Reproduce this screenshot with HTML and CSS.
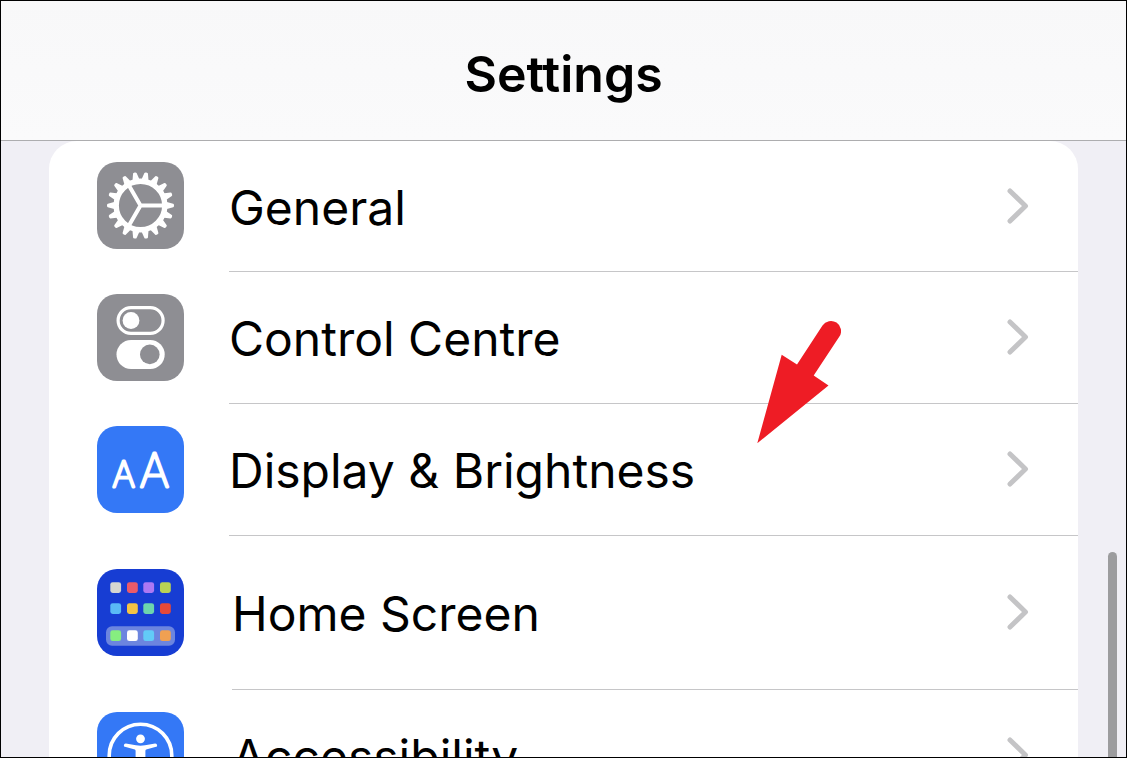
FILE: index.html
```
<!DOCTYPE html>
<html lang="en-GB">
<head>
<meta charset="utf-8">
<meta name="viewport" content="width=device-width, initial-scale=1">
<title>Settings</title>
<link rel="stylesheet" href="styles.css">
</head>
<body>
<div class="screen">
  <header class="navbar"><h1 class="title">Settings</h1></header>
  <main class="content">
    <nav class="card" aria-label="Settings">
      <a class="row row-first" href="#general">
        <svg class="icon icon-grey" viewBox="0 0 87 87" aria-hidden="true">
          <defs>
            <path id="tooth" d="M68 39.6 L76.2 41.7 Q77 42 77 43.5 T76.2 45.3 L68 47.4Z"/>
            <g id="teeth">
              <use href="#tooth"/>
              <use href="#tooth" transform="rotate(20 43.5 43.5)"/>
              <use href="#tooth" transform="rotate(40 43.5 43.5)"/>
              <use href="#tooth" transform="rotate(60 43.5 43.5)"/>
              <use href="#tooth" transform="rotate(80 43.5 43.5)"/>
              <use href="#tooth" transform="rotate(100 43.5 43.5)"/>
            </g>
          </defs>
          <g fill="#fff">
            <use href="#teeth"/>
            <use href="#teeth" transform="rotate(120 43.5 43.5)"/>
            <use href="#teeth" transform="rotate(240 43.5 43.5)"/>
          </g>
          <circle cx="43.5" cy="43.5" r="24.3" fill="none" stroke="#fff" stroke-width="5.4"/>
          <path d="M43.5 43.5H67M43.5 43.5L31.8 23.2M43.5 43.5L31.8 63.8" stroke="#fff" stroke-width="4"/>
        </svg>
        <span class="label">General</span>
        <svg class="chevron" viewBox="0 0 22 36" aria-hidden="true"><path d="M3 3L18.5 18L3 33"/></svg>
      </a>
      <a class="row" href="#control-centre">
        <svg class="icon icon-grey" viewBox="0 0 87 87" aria-hidden="true">
          <rect x="21.1" y="13.6" width="45" height="25.8" rx="12.9" fill="none" stroke="#fff" stroke-width="3.2"/>
          <circle cx="34" cy="26.5" r="8.4" fill="#fff"/>
          <rect x="19.5" y="46" width="48.2" height="29" rx="14.5" fill="#fff"/>
          <circle cx="52.8" cy="60.4" r="9.8" fill="#8e8e93"/>
        </svg>
        <span class="label">Control Centre</span>
        <svg class="chevron" viewBox="0 0 22 36" aria-hidden="true"><path d="M3 3L18.5 18L3 33"/></svg>
      </a>
      <a class="row" href="#display-brightness">
        <svg class="icon icon-blue" viewBox="0 0 87 87" aria-hidden="true">
          <g class="icon-letters">
            <text x="26.8" y="60.6" font-size="35">A</text>
            <text x="57.4" y="60.6" font-size="46">A</text>
          </g>
        </svg>
        <span class="label">Display &amp; Brightness</span>
        <svg class="chevron" viewBox="0 0 22 36" aria-hidden="true"><path d="M3 3L18.5 18L3 33"/></svg>
        <svg class="pointer" viewBox="0 0 84 124" aria-hidden="true">
          <path d="M0.3 123.3L24.7 34.7L40 44.5L65.5 5.5A10 10 0 0 1 82.4 16.6L56.7 55.5L71.5 65.5Z"/>
        </svg>
      </a>
      <a class="row row-tall row-inset" href="#home-screen">
        <svg class="icon icon-navy" viewBox="0 0 87 87" aria-hidden="true">
          <rect x="9" y="57.3" width="69" height="19.5" rx="6" fill="#6c85df"/>
          <rect x="13.3" y="13.2" width="10.8" height="10.8" rx="2.4" fill="#d5d6d1"/>
          <rect x="30" y="13.2" width="10.8" height="10.8" rx="2.4" fill="#ea5b69"/>
          <rect x="46.3" y="13.2" width="10.8" height="10.8" rx="2.4" fill="#ad78f3"/>
          <rect x="63" y="13.2" width="10.8" height="10.8" rx="2.4" fill="#b9d255"/>
          <rect x="13.3" y="34.2" width="10.8" height="10.8" rx="2.4" fill="#5abaf6"/>
          <rect x="30" y="34.2" width="10.8" height="10.8" rx="2.4" fill="#f5c444"/>
          <rect x="46.3" y="34.2" width="10.8" height="10.8" rx="2.4" fill="#6dd5ad"/>
          <rect x="63" y="34.2" width="10.8" height="10.8" rx="2.4" fill="#e54939"/>
          <rect x="13.3" y="61.3" width="10.8" height="10.8" rx="2.4" fill="#86ee80"/>
          <rect x="30" y="61.3" width="10.8" height="10.8" rx="2.4" fill="#fff"/>
          <rect x="46.3" y="61.3" width="10.8" height="10.8" rx="2.4" fill="#62cbf7"/>
          <rect x="63" y="61.3" width="10.8" height="10.8" rx="2.4" fill="#f0a052"/>
        </svg>
        <span class="label">Home Screen</span>
        <svg class="chevron" viewBox="0 0 22 36" aria-hidden="true"><path d="M3 3L18.5 18L3 33"/></svg>
      </a>
      <a class="row row-inset" href="#accessibility">
        <svg class="icon icon-blue" viewBox="0 0 87 87" aria-hidden="true">
          <circle cx="43.5" cy="43.5" r="31.3" fill="none" stroke="#fff" stroke-width="3.6"/>
          <circle cx="43.5" cy="26.8" r="4.4" fill="#fff"/>
          <path d="M28.8 31.6L39 33.3Q43.5 34 48 33.3L58.2 31.6Q60.6 31.8 60 34.4L49.2 37.6Q48.4 38 48.4 39V46L52.6 60Q52 63 49.4 61.6L43.5 49L37.6 61.6Q35 63 34.4 60L38.6 46V39Q38.6 38 37.8 37.6L27 34.4Q26.4 31.8 28.8 31.6Z" fill="#fff"/>
        </svg>
        <span class="label">Accessibility</span>
        <svg class="chevron" viewBox="0 0 22 36" aria-hidden="true"><path d="M3 3L18.5 18L3 33"/></svg>
      </a>
    </nav>
    <div class="scroll-thumb"></div>
  </main>
</div>
</body>
</html>
```

FILE: styles.css
```
* { box-sizing: border-box; }

body {
  margin: 0;
  font-family: Inter, "Liberation Sans", sans-serif;
  color: #000;
}

.screen {
  display: flex;
  flex-direction: column;
  height: 100vh;
  overflow: hidden;
  border: 1px solid #000;
  background: #f0eff5;
}

.navbar {
  flex: none;
  padding: 43px 16px 36px;
  border-bottom: 1px solid #adadaf;
  background: linear-gradient(#f8f8f9, #fafafb);
  text-align: center;
}

.title {
  margin: 0;
  font-size: 50px;
  line-height: 60px;
  font-weight: 600;
}

.content {
  position: relative;
  flex: 1;
  min-height: 0;
  overflow: hidden;
  padding: 0 48px;
}

.card {
  border-radius: 28px 28px 0 0;
  background: #fff;
}

.row {
  position: relative;
  display: flex;
  align-items: center;
  gap: 45px;
  min-height: 132px;
  padding: 0 0 2px 48px;
  color: inherit;
  text-decoration: none;
}

.row-first { min-height: 131px; }
.row-tall { min-height: 154px; }
.row-inset { gap: 48px; }

/* Separator starts level with the label. */
.row::after {
  content: "";
  position: absolute;
  right: 0;
  bottom: 0;
  left: 180px;
  height: 1px;
  background: #c6c6c8;
}

.row-inset::after { left: 183px; }

.icon {
  flex: none;
  width: 87px;
  height: 87px;
  border-radius: 20px;
}

.icon-grey { background: #8e8e93; }
.icon-blue { background: #3478f6; }
.icon-navy { background: #173dd3; }

.icon-letters {
  fill: #fff;
  stroke: #fff;
  stroke-width: 3;
  stroke-linejoin: round;
  font-weight: 100;
  text-anchor: middle;
}

.label {
  flex: 1;
  padding-top: 4px;
  font-size: 48px;
  line-height: 60px;
  white-space: nowrap;
}

.chevron {
  flex: none;
  width: 22px;
  height: 36px;
  margin-right: 49px;
  fill: none;
  stroke: #c4c4c6;
  stroke-width: 5;
  stroke-linecap: round;
  stroke-linejoin: round;
}

.pointer {
  position: absolute;
  z-index: 1;
  right: 237px;
  bottom: 92px;
  width: 84px;
  height: 124px;
  fill: #ee1c25;
}

.scroll-thumb {
  position: absolute;
  top: 411px;
  right: 9px;
  bottom: -9px;
  width: 9px;
  border-radius: 5px;
  background: #9c9c9e;
}
```
